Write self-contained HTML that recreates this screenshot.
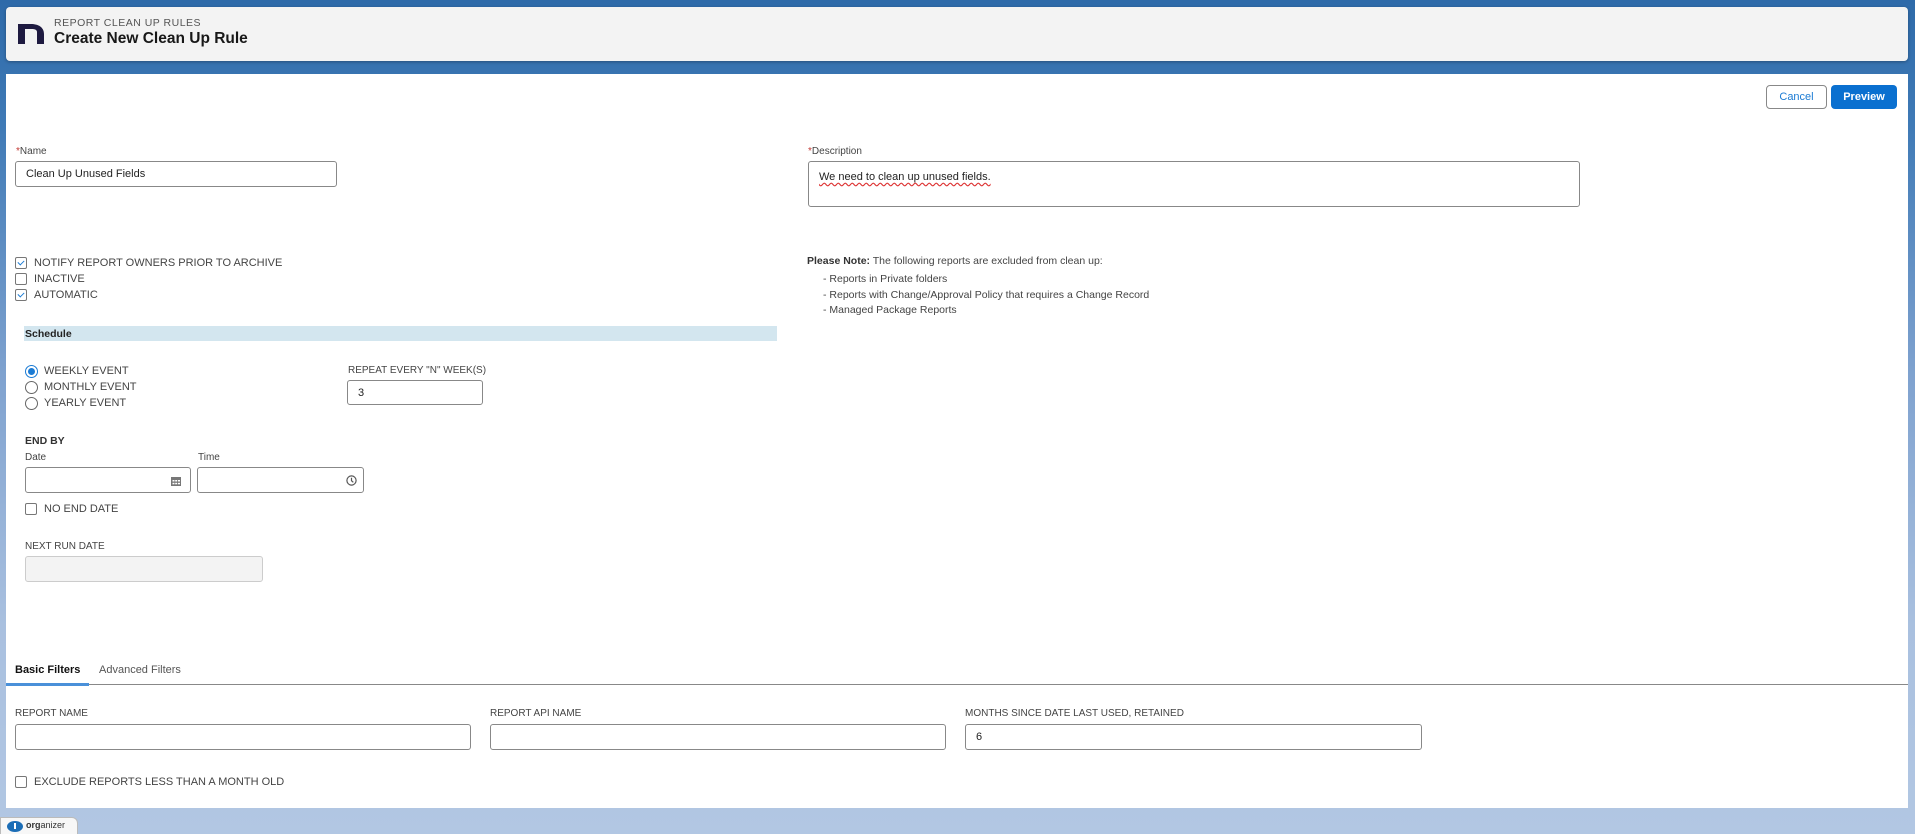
<!DOCTYPE html>
<html style="background:#b2c7e3"><head><meta charset="utf-8"><style>
*{box-sizing:border-box;margin:0;padding:0}
html,body{width:1915px;height:834px;overflow:hidden}
body{position:relative;font-family:"Liberation Sans",sans-serif;color:#333;background:linear-gradient(180deg,#2e6aa9 0%,#3f7ab6 15%,#7fa2cf 45%,#a9c0df 75%,#b2c7e3 100%)}
.a{position:absolute}
.hdr{left:6px;top:7px;width:1902px;height:54px;background:#f3f3f3;border-radius:4px;box-shadow:0 1px 3px rgba(0,0,0,.3)}
.panel{left:6px;top:74px;width:1902px;height:734px;background:#fff}
.lbl{font-size:10px;color:#444}
.req{color:#c23934}
.inp{border:1px solid #888;border-radius:3px;background:#fff;font-size:11px;color:#222;padding-left:10px;display:flex;align-items:center}
.cb{width:12px;height:12px;border:1px solid #777;border-radius:2px;background:#fff}
.ck{position:absolute;left:3px;top:1px;width:4px;height:6px;border:solid #1b7bd4;border-width:0 1.2px 1.2px 0;transform:rotate(45deg)}
.t{font-size:11px;color:#444;white-space:nowrap}
.rd{width:13px;height:13px;border:1px solid #666;border-radius:50%;background:#fff}
</style></head><body>
<div class="a hdr">
 <svg class="a" style="left:12px;top:13px" width="26" height="24" viewBox="0 0 26 24"><path d="M0 24V4h13c7 0 13 3 13 10v10h-7V12c0-2-2-3-5-3H7v15z" fill="#1e1a40"/><rect x="0" y="4" width="7" height="20" fill="#1e1a40"/></svg>
 <div class="a" style="left:48px;top:10px;font-size:10.5px;letter-spacing:.5px;color:#555">REPORT CLEAN UP RULES</div>
 <div class="a" style="left:48px;top:23px;font-size:15.5px;font-weight:bold;color:#181818">Create New Clean Up Rule</div>
</div>
<div class="a panel"></div>
<div class="a" style="left:1766px;top:85px;width:61px;height:24px;border:1px solid #888;border-radius:4px;color:#1b7bd4;font-size:11px;display:flex;align-items:center;justify-content:center;background:#fff">Cancel</div>
<div class="a" style="left:1831px;top:85px;width:66px;height:24px;border-radius:4px;background:#0a70d0;color:#fff;font-size:11px;font-weight:bold;display:flex;align-items:center;justify-content:center">Preview</div>

<div class="a lbl" style="left:16px;top:146px"><span class="req">*</span>Name</div>
<div class="a inp" style="left:15px;top:161px;width:322px;height:26px">Clean Up Unused Fields</div>
<div class="a lbl" style="left:808px;top:146px"><span class="req">*</span>Description</div>
<div class="a inp" style="left:808px;top:161px;width:772px;height:46px;align-items:flex-start;padding-top:9px"><span style="text-decoration:underline wavy #d33;text-underline-offset:2px">We need to clean up unused fields.</span></div>

<div class="a cb" style="left:15px;top:257px"><div class="ck"></div></div><div class="a t" style="left:34px;top:257px">NOTIFY REPORT OWNERS PRIOR TO ARCHIVE</div>
<div class="a cb" style="left:15px;top:273px"></div><div class="a t" style="left:34px;top:273px">INACTIVE</div>
<div class="a cb" style="left:15px;top:289px"><div class="ck"></div></div><div class="a t" style="left:34px;top:289px">AUTOMATIC</div>

<div class="a" style="left:807px;top:255px;font-size:10.5px;color:#444"><b style="color:#333">Please Note:</b> The following reports are excluded from clean up:</div>
<div class="a" style="left:823px;top:272px;font-size:10.5px;color:#444;line-height:15.5px">- Reports in Private folders<br>- Reports with Change/Approval Policy that requires a Change Record<br>- Managed Package Reports</div>

<div class="a" style="left:24px;top:326px;width:753px;height:15px;background:#d3e6ef;font-size:10.5px;font-weight:bold;color:#222;padding:2px 0 0 1px">Schedule</div>

<div class="a rd" style="left:25px;top:365px;border-color:#1b7bd4"></div><div class="a" style="left:28px;top:368px;width:7px;height:7px;border-radius:50%;background:#1b7bd4"></div>
<div class="a t" style="left:44px;top:365px">WEEKLY EVENT</div>
<div class="a rd" style="left:25px;top:381px"></div><div class="a t" style="left:44px;top:381px">MONTHLY EVENT</div>
<div class="a rd" style="left:25px;top:397px"></div><div class="a t" style="left:44px;top:397px">YEARLY EVENT</div>
<div class="a lbl" style="left:348px;top:365px">REPEAT EVERY "N" WEEK(S)</div>
<div class="a inp" style="left:347px;top:380px;width:136px;height:25px">3</div>

<div class="a" style="left:25px;top:435px;font-size:10.5px;font-weight:bold;color:#333">END BY</div>
<div class="a lbl" style="left:25px;top:452px">Date</div>
<div class="a lbl" style="left:198px;top:452px">Time</div>
<div class="a inp" style="left:25px;top:467px;width:166px;height:26px"></div>
<svg class="a" style="left:171px;top:476px" width="10" height="10" viewBox="0 0 10 10"><rect x="0" y="1" width="10" height="9" fill="#777"/><g fill="#fff"><rect x="1.5" y="4" width="2" height="1.5"/><rect x="4.2" y="4" width="2" height="1.5"/><rect x="7" y="4" width="2" height="1.5"/><rect x="1.5" y="6.8" width="2" height="1.5"/><rect x="4.2" y="6.8" width="2" height="1.5"/><rect x="7" y="6.8" width="2" height="1.5"/></g></svg>
<div class="a inp" style="left:197px;top:467px;width:167px;height:26px"></div>
<svg class="a" style="left:346px;top:475px" width="11" height="11" viewBox="0 0 11 11"><circle cx="5.5" cy="5.5" r="4.6" fill="none" stroke="#555" stroke-width="1.2"/><path d="M5.5 2.8V5.7L7.3 7.3" fill="none" stroke="#555" stroke-width="1.2"/></svg>
<div class="a cb" style="left:25px;top:503px"></div><div class="a t" style="left:44px;top:503px">NO END DATE</div>
<div class="a lbl" style="left:25px;top:541px">NEXT RUN DATE</div>
<div class="a" style="left:25px;top:556px;width:238px;height:26px;border:1px solid #ccc;border-radius:3px;background:#f3f3f3"></div>

<div class="a" style="left:15px;top:664px;font-size:11px;font-weight:bold;color:#111">Basic Filters</div>
<div class="a" style="left:99px;top:664px;font-size:11px;color:#555">Advanced Filters</div>
<div class="a" style="left:6px;top:684px;width:1902px;height:1px;background:#888"></div>
<div class="a" style="left:6px;top:683px;width:83px;height:3px;background:#4a90d9"></div>

<div class="a lbl" style="left:15px;top:708px">REPORT NAME</div>
<div class="a inp" style="left:15px;top:724px;width:456px;height:26px"></div>
<div class="a lbl" style="left:490px;top:708px">REPORT API NAME</div>
<div class="a inp" style="left:490px;top:724px;width:456px;height:26px"></div>
<div class="a lbl" style="left:965px;top:708px">MONTHS SINCE DATE LAST USED, RETAINED</div>
<div class="a inp" style="left:965px;top:724px;width:457px;height:26px">6</div>
<div class="a cb" style="left:15px;top:776px"></div><div class="a t" style="left:34px;top:776px">EXCLUDE REPORTS LESS THAN A MONTH OLD</div>

<div class="a" style="left:0;top:817px;width:78px;height:20px;background:#f7f7f7;border:1px solid #bbb;border-radius:0 6px 0 0"></div>
<svg class="a" style="left:7px;top:821px" width="16" height="11" viewBox="0 0 16 11"><ellipse cx="8" cy="5.5" rx="8" ry="5.5" fill="#1b6db6"/><rect x="7" y="2" width="2" height="6" fill="#fff"/></svg>
<div class="a" style="left:26px;top:820px;font-size:9px;color:#333"><b>org</b>anizer</div>
</body></html>
